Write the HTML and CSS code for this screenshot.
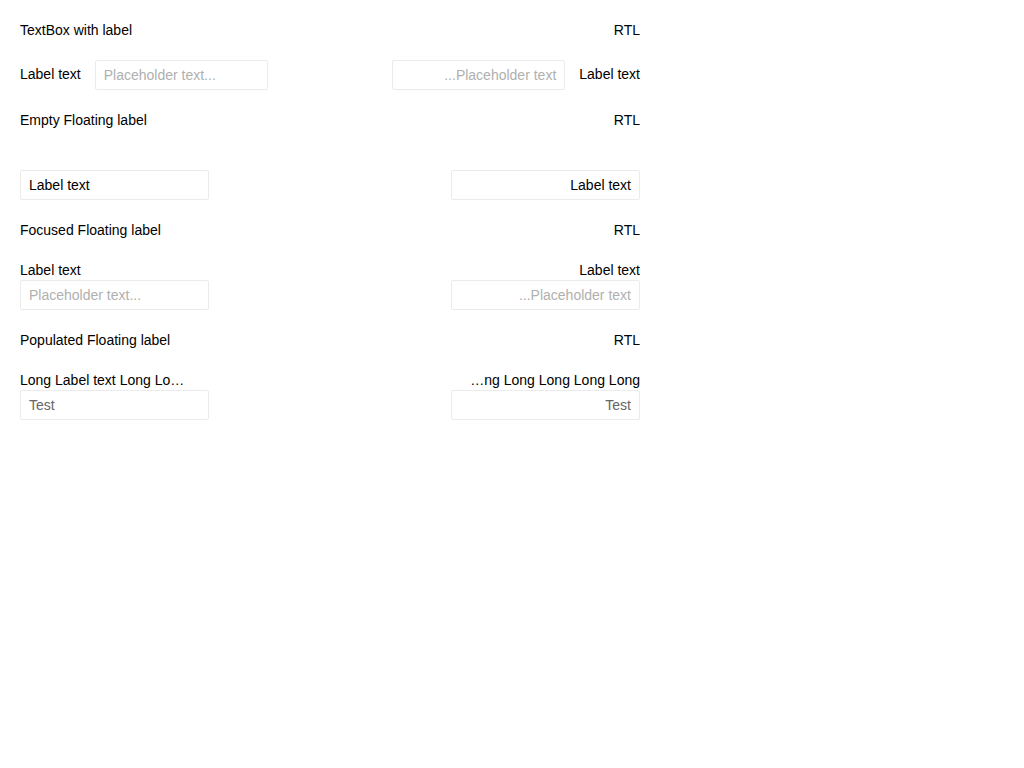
FILE: index.html
```html
<!DOCTYPE html>
<html>
<head>
<meta charset="utf-8">
<link rel="stylesheet" href="styles.css">
</head>
<body>
<div class="page">
  <div class="row">
    <div class="col"><div class="head">TextBox with label</div></div>
    <div class="col rtl"><div class="head">RTL</div></div>
  </div>
  <div class="row">
    <div class="col inline">
      <span class="lbl">Label text</span>
      <div class="box small ph">Placeholder text...</div>
    </div>
    <div class="col inline rtl">
      <span class="lbl">Label text</span>
      <div class="box small ph">Placeholder text...</div>
    </div>
  </div>
  <div class="row">
    <div class="col"><div class="head">Empty Floating label</div></div>
    <div class="col rtl"><div class="head">RTL</div></div>
  </div>
  <div class="row">
    <div class="col stack">
      <div class="flabel"></div>
      <div class="box wide">Label text</div>
    </div>
    <div class="col stack rtl">
      <div class="flabel"></div>
      <div class="box wide">Label text</div>
    </div>
  </div>
  <div class="row">
    <div class="col"><div class="head">Focused Floating label</div></div>
    <div class="col rtl"><div class="head">RTL</div></div>
  </div>
  <div class="row">
    <div class="col stack">
      <div class="flabel">Label text</div>
      <div class="box wide ph">Placeholder text...</div>
    </div>
    <div class="col stack rtl">
      <div class="flabel">Label text</div>
      <div class="box wide ph">Placeholder text...</div>
    </div>
  </div>
  <div class="row">
    <div class="col"><div class="head">Populated Floating label</div></div>
    <div class="col rtl"><div class="head">RTL</div></div>
  </div>
  <div class="row">
    <div class="col stack">
      <div class="flabel">Long Label text Long Long Long Long Long</div>
      <div class="box wide val">Test</div>
    </div>
    <div class="col stack rtl">
      <div class="flabel">Long Label text Long Long Long Long Long</div>
      <div class="box wide val">Test</div>
    </div>
  </div>
</div>
</body>
</html>
```
FILE: styles.css
```css
html, body {
  margin: 0;
  padding: 0;
  background: #ffffff;
}
body {
  font-family: "Liberation Sans", Arial, sans-serif;
  font-size: 14px;
  color: #000000;
}
.page {
  width: 620px;
  padding: 20px;
  display: flex;
  flex-direction: column;
  gap: 20px;
}
.row {
  display: flex;
  justify-content: space-between;
  align-items: flex-start;
}
.col {
  display: flex;
}
.rtl {
  direction: rtl;
}
.head {
  line-height: 20px;
  height: 20px;
}
.inline {
  align-items: center;
  gap: 14px;
}
.lbl {
  line-height: 16px;
  margin-top: -2px;
}
.stack {
  flex-direction: column;
  align-items: flex-start;
  width: 189px;
}
.flabel {
  height: 20px;
  line-height: 20px;
  width: 170px;
  white-space: nowrap;
  overflow: hidden;
  text-overflow: ellipsis;
}
.box {
  box-sizing: border-box;
  height: 30px;
  line-height: 28px;
  border: 1px solid #ebebeb;
  border-radius: 2px;
  padding: 0 8px;
  white-space: nowrap;
  overflow: hidden;
  color: #000000;
}
.small {
  width: 173px;
}
.wide {
  width: 189px;
}
.ph {
  color: #b0b0b0;
}
.val {
  color: #666666;
}
```
